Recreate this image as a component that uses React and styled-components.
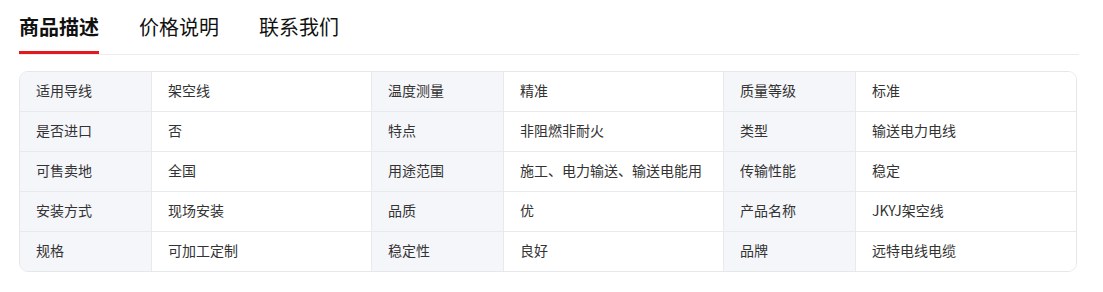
import React from "react";
import styled, { createGlobalStyle } from "styled-components";

const Global = createGlobalStyle`
  html, body { margin: 0; padding: 0; background: #fff; }
  body { font-family: "Noto Sans CJK SC", "Noto Sans", sans-serif; color: #333; }
`;

const Page = styled.div`
  width: 1060px;
  padding-left: 19px;
`;

const TabBar = styled.div`
  display: flex;
  gap: 40px;
  border-bottom: 1px solid #ececee;
`;

const Tab = styled.div`
  font-size: 20px;
  line-height: 28px;
  padding-top: 13px;
  padding-bottom: 10px;
  font-weight: ${(p) => (p.$active ? 700 : 400)};
  color: #111;
  border-bottom: 3px solid ${(p) => (p.$active ? "#e4191e" : "transparent")};
`;

const Table = styled.div`
  margin-top: 16px;
  width: 1058px;
  box-sizing: border-box;
  border: 1px solid #e6e7eb;
  border-radius: 9px;
  overflow: hidden;
  display: grid;
  grid-template-columns: 132px 220px 132px 220px 132px 220px;
  grid-template-rows: repeat(4, 40px) 39px;
`;

const Cell = styled.div`
  box-sizing: border-box;
  display: flex;
  align-items: center;
  padding: 0 0 3px 16px;
  font-size: 14px;
  line-height: 20px;
  color: #333;
  background: ${(p) => (p.$label ? "#f5f6fa" : "#fff")};
  border-right: ${(p) => (p.$last ? "none" : "1px solid #e9eaee")};
  border-bottom: ${(p) => (p.$bottom ? "none" : "1px solid #e9eaee")};
`;

const rows = [
  ["适用导线", "架空线", "温度测量", "精准", "质量等级", "标准"],
  ["是否进口", "否", "特点", "非阻燃非耐火", "类型", "输送电力电线"],
  ["可售卖地", "全国", "用途范围", "施工、电力输送、输送电能用", "传输性能", "稳定"],
  ["安装方式", "现场安装", "品质", "优", "产品名称", "JKYJ架空线"],
  ["规格", "可加工定制", "稳定性", "良好", "品牌", "远特电线电缆"],
];

export default function App() {
  return (
    <>
      <Global />
      <Page>
        <TabBar>
          <Tab $active>商品描述</Tab>
          <Tab>价格说明</Tab>
          <Tab>联系我们</Tab>
        </TabBar>
        <Table>
          {rows.map((r, ri) =>
            r.map((c, ci) => (
              <Cell
                key={`${ri}-${ci}`}
                $label={ci % 2 === 0}
                $last={ci === 5}
                $bottom={ri === rows.length - 1}
              >
                {c}
              </Cell>
            ))
          )}
        </Table>
      </Page>
    </>
  );
}
